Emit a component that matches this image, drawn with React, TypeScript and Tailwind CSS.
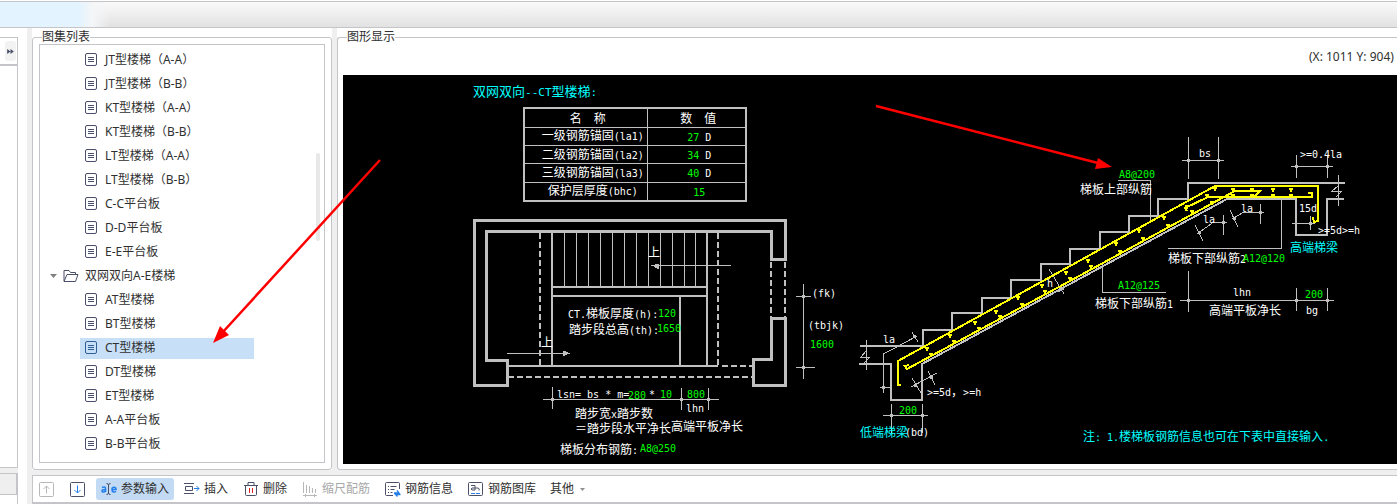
import type { ReactNode } from "react";
import clsx from "clsx";

const CJK = /([\u3000-\u9fff\uff00-\uffef]+)/;

const treads = [564, 576, 588, 600, 612, 624, 636, 648, 660, 672, 684, 695];

// Distribution bars, drawn as small dots along the main bars
const rebarDots = [
  [927, 348], [950, 335], [975, 322], [996, 311], [1018, 297], [1042, 285], [1066, 272],
  [931, 354], [954, 341], [979, 328], [1000, 316], [1022, 304], [1045, 291],
  [1088, 260], [1116, 243], [1139, 230], [1164, 217], [1187, 206], [1207, 195], [1215, 188],
  [1070, 278], [1091, 266], [1120, 251], [1143, 238], [1168, 225], [1192, 211], [1212, 202],
  [1233, 189], [1233, 195], [1252, 189], [1252, 195], [1273, 189], [1273, 195], [1291, 189], [1291, 195],
];

// x, y, text
const whiteLabels: [number, number, string][] = [
  [648, 257, "上"],
  [541, 347, "上"],
  [568, 318, "CT.梯板厚度(h):"],
  [569, 334, "踏步段总高(th):"],
  [812, 297, "(fk)"],
  [808, 329, "(tbjk)"],
  [557, 398, "lsn= bs * m="],
  [649, 398, "*"],
  [686, 412, "lhn"],
  [575, 418, "踏步宽x踏步数"],
  [575, 433, "＝踏步段水平净长"],
  [671, 431, "高端平板净长"],
  [560, 454, "梯板分布钢筋:"],
  [1080, 194, "梯板上部纵筋"],
  [1199, 157, "bs"],
  [1300, 158, ">=0.4la"],
  [1299, 212, "15d"],
  [1318, 234, ">=5d>=h"],
  [1203, 223, "la"],
  [1241, 212, "la"],
  [1168, 263, "梯板下部纵筋2"],
  [1095, 308, "梯板下部纵筋1"],
  [1233, 296, "lhn"],
  [1209, 315, "高端平板净长"],
  [1306, 314, "bg"],
  [1047, 287, "h"],
  [883, 343, "la"],
  [927, 396, ">=5d，>=h"],
  [905, 436, "(bd)"],
];

const greenLabels: [number, number, string][] = [
  [658, 317, "120"],
  [657, 332, "1650"],
  [810, 348, "1600"],
  [628, 399, "280"],
  [660, 398, "10"],
  [687, 398, "800"],
  [640, 452, "A8@250"],
  [1119, 178, "A8@200"],
  [1243, 262, "A12@120"],
  [1118, 289, "A12@125"],
  [1305, 298, "200"],
  [899, 414, "200"],
];

const cyanLabels: [number, number, string][] = [
  [860, 437, "低端梯梁"],
  [1290, 252, "高端梯梁"],
  [1083, 441, "注: 1.楼梯板钢筋信息也可在下表中直接输入."],
];

const anchorRows = [
  { name: "一级钢筋锚固(la1)", value: "27", unit: "D" },
  { name: "二级钢筋锚固(la2)", value: "34", unit: "D" },
  { name: "三级钢筋锚固(la3)", value: "40", unit: "D" },
  { name: "保护层厚度(bhc)", value: "15", unit: "" },
];

const upperItems = [
  "JT型楼梯（A-A）",
  "JT型楼梯（B-B）",
  "KT型楼梯（A-A）",
  "KT型楼梯（B-B）",
  "LT型楼梯（A-A）",
  "LT型楼梯（B-B）",
  "C-C平台板",
  "D-D平台板",
  "E-E平台板",
];

const lowerItems = [
  "AT型楼梯",
  "BT型楼梯",
  "CT型楼梯",
  "DT型楼梯",
  "ET型楼梯",
  "A-A平台板",
  "B-B平台板",
];

// Latin characters are half as wide as the Chinese ones
function CadText({ x, y, text, big }: { x: number; y: number; text: string; big?: boolean }) {
  return (
    <text x={x} y={y} xmlSpace="preserve">
      {text.split(CJK).map((part, i) => (
        <tspan
          key={i}
          className={big ? (CJK.test(part) ? "text-[13px]" : "text-[11px]") : CJK.test(part) ? "text-[12px]" : "text-[10px]"}
        >
          {part}
        </tspan>
      ))}
    </text>
  );
}

function CadCell({ text }: { text: string }) {
  return (
    <>
      {text.split(CJK).map((part, i) => (
        <span key={i} className={CJK.test(part) ? "text-[12px]" : "text-[10px]"}>
          {part}
        </span>
      ))}
    </>
  );
}

function AnchorTable() {
  return (
    <table className="absolute left-[180px] top-[32px] h-[95px] w-[224px] table-fixed border-collapse border-2 border-[#c0c0c0] leading-3 text-white">
      <thead>
        <tr className="h-[19px]">
          <th className="w-[123px] border border-[#c0c0c0] p-0 pt-[3px] pl-1 text-xs leading-3 font-normal">名　称</th>
          <th className="border border-[#c0c0c0] p-0 pt-[3px] pl-1 text-xs leading-3 font-normal">数　值</th>
        </tr>
      </thead>
      <tbody>
        {anchorRows.map((row) => (
          <tr key={row.name}>
            <td className="border border-[#c0c0c0] p-0 pt-px pl-[14px] text-center whitespace-nowrap">
              <CadCell text={row.name} />
            </td>
            <td className="border border-[#c0c0c0] p-0 pt-[3px] pl-[6px] text-center text-[10px]">
              <span className="text-[#00ff00]">{row.value}</span> {row.unit}
            </td>
          </tr>
        ))}
      </tbody>
    </table>
  );
}

function PlanView() {
  return (
    <g stroke="#c0c0c0" fill="none">
      {/* Walls */}
      <g strokeWidth="3">
        <path d="M785.5 259V220.5H474.5V385.5H507.5V360.5H486.5V231.5H771.5V259.5H787" />
        <path d="M787 318.5H771.5V359.5H753.5V385.5H785.5V318" />
      </g>
      <g strokeWidth="2">
        <path d="M552 232V366M707 232V366M680 296V366M552 287H707M552 296H707M508 366H718" />
        <path strokeDasharray="6 3" d="M540 233V366M718 233V366M508 377H752M722 366H752M771 262V318M785 262V318" />
      </g>
      {treads.map((x) => (
        <path key={x} d={`M${x + 0.5} 232V287`} />
      ))}
      {/* Walking direction */}
      <path d="M651 265.5H731M507 353.5H570" />
      <path fill="#c0c0c0" stroke="none" d="M652 265.5l5-2h2v5h-2zM569 353.5l-4 2h-2v-5h2z" />
      {/* Dimensions */}
      <path d="M803.5 284V379M796 296.5H811M796 367.5H815M543 399.5H719M552.5 387V409M681.5 388V410M708.5 388V410" />
      <path strokeWidth="3" d="M802 296.5h3M802 367.5h3M551 399.5h3M680 399.5h3M707 399.5h3" />
    </g>
  );
}

function SectionView() {
  return (
    <g fill="none">
      <g stroke="#c0c0c0" strokeWidth="2">
        <path d="M860 346H923V330H952V313H982V298H1011V280H1041V264H1070V249H1100V232H1129V216H1158V199H1188V183H1345" />
        <path d="M859 364H891V400H922V364L1227 199H1296V235H1327V199H1344" />
      </g>
      <g stroke="#c0c0c0">
        <path d="M866.5 340V370M866 351L861 357H870L864 363" />
        <path d="M917 336L883.5 354V393M912 332L918 342M880 387.5H891" />
        <path d="M911 387L937 373M912 378L921 393M928 371L935 385" />
        <path d="M883 415.5H928M891.5 404V433M922.5 404V433" />
        <path d="M1049 269L1064 294M1051 276L1056 273M1058 292L1064 289" />
        <path d="M1118 180.5H1150.5V221M1102.5 263V292.5H1166M1168 248.5H1281.5V197" />
        <path d="M1188.5 137V179M1218.5 137V179M1182 160.5H1224" />
        <path d="M1296.5 155V178M1327.5 155V178M1291 166.5H1333" />
        <path d="M1338.5 175V206M1338 186L1332 191H1342L1336 197" />
        <path d="M1292 223.5H1315M1310.5 216V230" />
        <path d="M1197 234L1213 222.5H1227M1223.5 215V235M1195 225L1203 241" />
        <path d="M1232 219L1243 212.5H1264M1260.5 204V224M1230 210L1238 227" />
        <path d="M1180 300.5H1334M1188.5 271V312M1296.5 288V311M1327.5 288V311" />
      </g>
      <g stroke="#c0c0c0" strokeWidth="3">
        <path d="M890 415.5h3M921 415.5h3M1187 160.5h3M1217 160.5h3M1295 166.5h3M1326 166.5h3M1187 300.5h3M1295 300.5h3M1326 300.5h3" />
        <path d="M882 387.5h3M913 336.5h3M914 385.5h3M930 377.5h3M1198 232.5h3M1233 218.5h3M1222 222.5h3M1259 212.5h3M1309 223.5h3" />
      </g>
      {/* Reinforcement */}
      <g stroke="#ffff00" strokeWidth="2">
        <path d="M901 385H898V361L1215 186H1318V221L1314 222L1313 217" />
        <path d="M909 365L905 366L907 369L1070 281L1235 191H1260L1254 197" />
        <path d="M1187 211L1185 208L1208 197H1312V193H1308" />
      </g>
      <path
        stroke="#ffff00"
        strokeWidth="2"
        d={rebarDots.map(([x, y]) => `M${x - 2} ${y}h4M${x} ${y - 1}v4`).join("")}
      />
    </g>
  );
}

function Drawing() {
  return (
    <div className="relative h-[389px] shrink-0 overflow-hidden bg-black font-['DejaVu_Sans_Mono','Noto_Sans_CJK_SC',monospace]">
      <svg width="1054" height="389" viewBox="343 75 1054 389" role="img" aria-label="双网双向--CT型楼梯">
        <g shapeRendering="crispEdges">
          <PlanView />
          <SectionView />
        </g>
        <g fill="#ffffff">
          {whiteLabels.map(([x, y, text]) => (
            <CadText key={`${x}-${y}`} x={x} y={y} text={text} />
          ))}
        </g>
        <g fill="#00ff00">
          {greenLabels.map(([x, y, text]) => (
            <CadText key={`${x}-${y}`} x={x} y={y} text={text} />
          ))}
        </g>
        <g fill="#00ffff">
          <CadText x={473} y={96} text="双网双向--CT型楼梯:" big />
          {cyanLabels.map(([x, y, text]) => (
            <CadText key={`${x}-${y}`} x={x} y={y} text={text} />
          ))}
        </g>
      </svg>
      <AnchorTable />
    </div>
  );
}

function PageIcon() {
  return (
    <svg width="12" height="14" viewBox="0 0 12 14" fill="none" stroke="currentColor" className="shrink-0">
      <rect x="0.5" y="0.5" width="11" height="12" rx="1.5" />
      <path d="M3 4.5h6M3 6.5h6M3 8.5h6" />
    </svg>
  );
}

function FolderIcon() {
  return (
    <svg width="16" height="14" viewBox="0 0 16 14" fill="none" stroke="#4a5068" className="shrink-0">
      <path d="M1 12V1.5h5l1.5 2h5V5M1 12.5L4 5.5h11l-2.5 7z" strokeLinejoin="round" />
    </svg>
  );
}

function TreeItem({ name, selected }: { name: string; selected?: boolean }) {
  return (
    <li className="flex h-6 items-center pl-10">
      <button
        className={clsx(
          "flex h-[21px] w-[174px] items-center gap-2 pl-[5px] text-left whitespace-nowrap",
          selected ? "bg-[#c8dff8]" : "bg-transparent"
        )}
      >
        <span className={selected ? "text-[#2f5f95]" : "text-[#4a5068]"}>
          <PageIcon />
        </span>
        {name}
      </button>
    </li>
  );
}

function TreeFolder({ name }: { name?: string }) {
  return (
    <li className="flex h-6 items-center pl-[10px]">
      <button className="flex items-center whitespace-nowrap" aria-expanded="true">
        <svg width="7" height="4" viewBox="0 0 7 4" className="mr-[6px]">
          <path d="M0 0h7L3.5 4z" fill="#808080" />
        </svg>
        <FolderIcon />
        <span className="ml-[6px]">{name}</span>
      </button>
    </li>
  );
}

function ToolButton({
  icon,
  label,
  active,
  disabled,
}: {
  icon: ReactNode;
  label?: string;
  active?: boolean;
  disabled?: boolean;
}) {
  return (
    <button
      disabled={disabled}
      className={clsx(
        "flex h-[22px] shrink-0 items-center gap-1 rounded-[3px] px-[5px] whitespace-nowrap",
        active && "bg-[#c2daf3]",
        disabled && "text-[#a8a8a8]"
      )}
    >
      <svg width="16" height="16" viewBox="0 0 16 16" fill="none" stroke={disabled ? "#b8b8b8" : "#4a5068"}>
        {icon}
      </svg>
      {label}
    </button>
  );
}

function Toolbar() {
  return (
    <div className="flex h-[29px] items-center gap-[5px] border-t border-b-2 border-l border-[#c5c5c9] bg-white pl-px">
      <ToolButton
        disabled
        icon={
          <>
            <rect x="0.5" y="1.5" width="14" height="14" rx="1" />
            <path d="M7.5 12.5V5M4.5 8l3-3 3 3" />
          </>
        }
      />
      <ToolButton
        icon={
          <>
            <rect x="0.5" y="1.5" width="14" height="14" rx="1" />
            <path d="M7.5 4.5V12M4.5 9l3 3 3-3" stroke="#2680eb" />
          </>
        }
      />
      <ToolButton
        active
        label="参数输入"
        icon={
          <>
            <path d="M5.5 2.5q2 0 2 1.5v8q0 1.5-2 1.5M9.5 2.5q-2 0-2 1.5M9.5 13.5q-2 0-2-1.5" />
            <path
              d="M1 6.5c2-1 3.5-.5 3.5 1V11M4.5 8.5C2.5 8.5 1 8.5 1 10s2.5 1.2 3.5 0M11 8.5h4c0-3-4-3-4 0s2.5 2.8 4 1.8"
              stroke="#2680eb"
              strokeWidth="1.6"
            />
          </>
        }
      />
      <ToolButton
        label="插入"
        icon={
          <>
            <path d="M0 2.5h10M0 12.5h10M1.5 5.5h7v4h-7z" />
            <path d="M10 7.5h5M12.5 5l2.5 2.5-2.5 2.5" stroke="#2680eb" />
          </>
        }
      />
      <ToolButton
        label="删除"
        icon={
          <>
            <path d="M1 4.5h14M5 4V1.5h6V4M2.5 5v8.5q0 1 1 1h9q1 0 1-1V5" />
            <path d="M6.5 7v5M9.5 7v5" stroke="#e02020" />
          </>
        }
      />
      <ToolButton
        disabled
        label="缩尺配筋"
        icon={<path d="M1.5 1v11M4.5 4v8M7.5 5v7M10.5 7v5M13.5 8v4M1 14.5h14M3.5 13v3M12.5 13v3" />}
      />
      <ToolButton
        label="钢筋信息"
        icon={
          <>
            <path d="M8 14.5H1.5q-1 0-1-1v-11q0-1 1-1h12q1 0 1 1V8M3 5.5h1M5.5 5.5h6M3 8.5h1M5.5 8.5h4M3 11.5h1M5.5 11.5h2" />
            <path d="M9 12h5l-2-2.5M15.5 13.5h-5l2 2" stroke="#2680eb" strokeWidth="1.3" />
          </>
        }
      />
      <ToolButton
        label="钢筋图库"
        icon={
          <>
            <rect x="0.5" y="1.5" width="14" height="13" rx="1" />
            <path d="M3 4.5h4v4.5H4q-1.5-1 0-2h6q2 .5 1 2.5" />
            <path d="M3 12.5h4M8 12.5h4" stroke="#2680eb" />
          </>
        }
      />
      <button className="flex h-[22px] items-center gap-[6px] px-1 whitespace-nowrap">
        其他
        <svg width="5" height="3" viewBox="0 0 5 3">
          <path d="M0 0h5L2.5 3z" fill="#909090" />
        </svg>
      </button>
    </div>
  );
}

function Arrows() {
  return (
    <svg
      className="pointer-events-none absolute top-0 left-0"
      width="1397"
      height="504"
      viewBox="0 0 1397 504"
      fill="#ff0000"
      stroke="#ff0000"
      aria-hidden="true"
    >
      <path d="M380 160L222 333M876 106L1098 163" strokeWidth="2.5" fill="none" />
      <path d="M213 343L220 326L229 335zM1112 167L1095 169L1098 158z" stroke="none" />
    </svg>
  );
}

function App() {
  return (
    <div className="relative flex h-screen flex-col overflow-hidden bg-white font-['Noto_Sans','Noto_Sans_CJK_SC',sans-serif] text-xs text-[#303030]">
      <header className="flex h-7 shrink-0 flex-col border-b border-[#c5c5c9] bg-white pt-px">
        <div className="flex flex-1 border-t border-[#c5c5c9] bg-linear-to-b from-[#fafafa] to-[#e2e2e2]">
          <div className="w-[110px] bg-linear-to-r from-[#e3f3ff] from-72% via-[#f4f6f7] via-84% to-transparent" />
        </div>
      </header>
      <main className="flex min-h-0 flex-1">
        <aside className="flex w-[27px] shrink-0 flex-col bg-white pt-[9px]">
          <div className="mr-[9px] flex h-[29px] items-center justify-end border-t border-r border-b-2 border-[#c5c5c9] pr-px">
            <button className="flex h-5 w-[11px] items-center justify-center rounded-[3px] bg-[#f2f2f2]" aria-label="展开">
              <svg width="7" height="5" viewBox="0 0 8 6" fill="#4a5068">
                <path d="M0 0l4 3-4 3zM4 0l4 3-4 3z" />
              </svg>
            </button>
          </div>
          <div className="mr-[9px] flex-1 border-r border-b border-[#c5c5c9]" />
          <div className="mr-[9px] h-[5px] bg-[#efefef]" />
          <div className="mr-[9px] h-[22px] border-t border-r-2 border-b border-[#c5c5c9] bg-[#efefef]" />
          <div className="mr-[9px] h-[9px] border-r border-[#c5c5c9]" />
        </aside>
        <div className="flex min-w-0 flex-1 flex-col bg-[#efefef] pl-[5px]">
          <div className="flex min-h-0 flex-1 gap-[5px]">
            <section className="flex w-[300px] shrink-0 bg-white pt-[2px]">
              <fieldset className="min-h-0 min-w-0 flex-1 rounded-[3px] border border-[#c5c5c9] px-[6px] pb-[6px]">
                <legend className="ml-[3px] leading-[14px]">图集列表</legend>
                <div className="relative h-full overflow-hidden border border-[#c5c5c9] pt-[3px]">
                  <ul>
                    {upperItems.map((name) => (
                      <TreeItem key={name} name={name} />
                    ))}
                    <TreeFolder name="双网双向A-E楼梯" />
                    {lowerItems.map((name) => (
                      <TreeItem key={name} name={name} selected={name === "CT型楼梯"} />
                    ))}
                    <TreeFolder />
                  </ul>
                  <div className="absolute top-[108px] right-1 h-[88px] w-1 rounded-full bg-[#e8e8e8]" />
                </div>
              </fieldset>
            </section>
            <section className="flex min-w-0 flex-1 bg-white pt-[2px]">
              <fieldset className="min-w-0 flex-1 rounded-l-[3px] border border-r-0 border-[#c5c5c9] pl-[5px]">
                <legend className="ml-1 leading-[14px]">图形显示</legend>
                <div className="flex h-[31px] items-center justify-end overflow-hidden pb-[6px]">
                  <span className="w-[88px] whitespace-nowrap">(X: 1011 Y: 904)</span>
                </div>
                <Drawing />
              </fieldset>
            </section>
          </div>
          <div className="mt-[5px]">
            <Toolbar />
          </div>
        </div>
      </main>
      <Arrows />
    </div>
  );
}

export default App;
